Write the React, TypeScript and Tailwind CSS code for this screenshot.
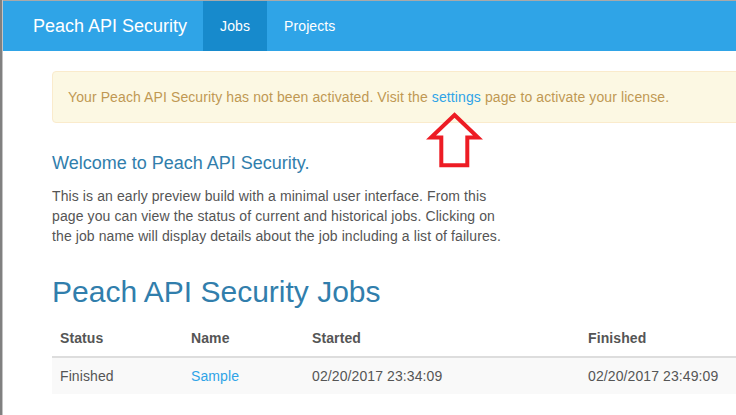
const JOBS = [
	{
		status: "Finished",
		name: "Sample",
		started: "02/20/2017 23:34:09",
		finished: "02/20/2017 23:49:09",
	},
];

function ArrowMark() {
	return (
		<svg
			className="absolute left-[420px] top-[105px]"
			width="70"
			height="66"
			viewBox="0 0 70 66"
		>
			<polygon
				points="34.5,10 58,32.5 47.3,32.5 47.3,60.3 21.3,60.3 21.3,32.5 11,32.5"
				fill="none"
				stroke="#ed1c24"
				strokeWidth="4"
				strokeLinejoin="miter"
			/>
		</svg>
	);
}

export default function App() {
	return (
		<div className="relative w-[736px] h-[415px] overflow-hidden bg-white font-['Liberation_Sans',Arial,sans-serif] text-[14px] leading-[20px] tracking-[0.1px] text-[#555555]">
			<div className="flex h-full">
				<div className="w-[3px] shrink-0 flex">
					<div className="w-[2px] bg-[#808080]" />
					<div className="w-[1px] bg-[#c4c4c4]" />
				</div>

				<div className="flex-1 min-w-0 border-t border-[#a9a9a9]">
					<nav className="h-[50px] bg-[#2fa4e7] flex pl-[15px]">
						<span className="pl-[15px] pr-[16px] py-[15px] text-[18px] leading-[20px] tracking-normal text-white">
							Peach API Security
						</span>
						<span className="px-[17px] py-[15px] bg-[#178acc] text-white">
							Jobs
						</span>
						<span className="px-[17px] py-[15px] text-white">Projects</span>
					</nav>

					<div className="pl-[49px] w-[989px]">
						<div className="mt-[20px] p-[15px] border border-[#faebcc] bg-[#fcf8e3] rounded-[4px] text-[#c09853]">
							Your Peach API Security has not been activated. Visit the{" "}
							<span className="text-[#2fa4e7]">settings</span> page to activate
							your license.
						</div>

						<h4 className="mt-[30px] text-[18px] leading-[20px] tracking-normal text-[#317eac]">
							Welcome to Peach API Security.
						</h4>
						<p className="mt-[13px] w-[457px]">
							This is an early preview build with a minimal user interface. From
							this page you can view the status of current and historical jobs.
							Clicking on the job name will display details about the job
							including a list of failures.
						</p>

						<h1 className="mt-[29px] text-[30px] leading-[33px] tracking-normal text-[#317eac]">
							Peach API Security Jobs
						</h1>

						<table className="mt-[12px] w-[940px] border-collapse text-left">
							<thead>
								<tr className="border-b-2 border-[#dddddd]">
									<th className="w-[131px] p-[8px] font-bold">Status</th>
									<th className="w-[121px] p-[8px] font-bold">Name</th>
									<th className="w-[276px] p-[8px] font-bold">Started</th>
									<th className="p-[8px] font-bold">Finished</th>
								</tr>
							</thead>
							<tbody>
								{JOBS.map((job, index) => (
									<tr key={index} className="bg-[#f9f9f9]">
										<td className="p-[8px]">{job.status}</td>
										<td className="p-[8px] text-[#2fa4e7]">{job.name}</td>
										<td className="p-[8px]">{job.started}</td>
										<td className="p-[8px]">{job.finished}</td>
									</tr>
								))}
							</tbody>
						</table>
					</div>
				</div>
			</div>

			<ArrowMark />
		</div>
	);
}
